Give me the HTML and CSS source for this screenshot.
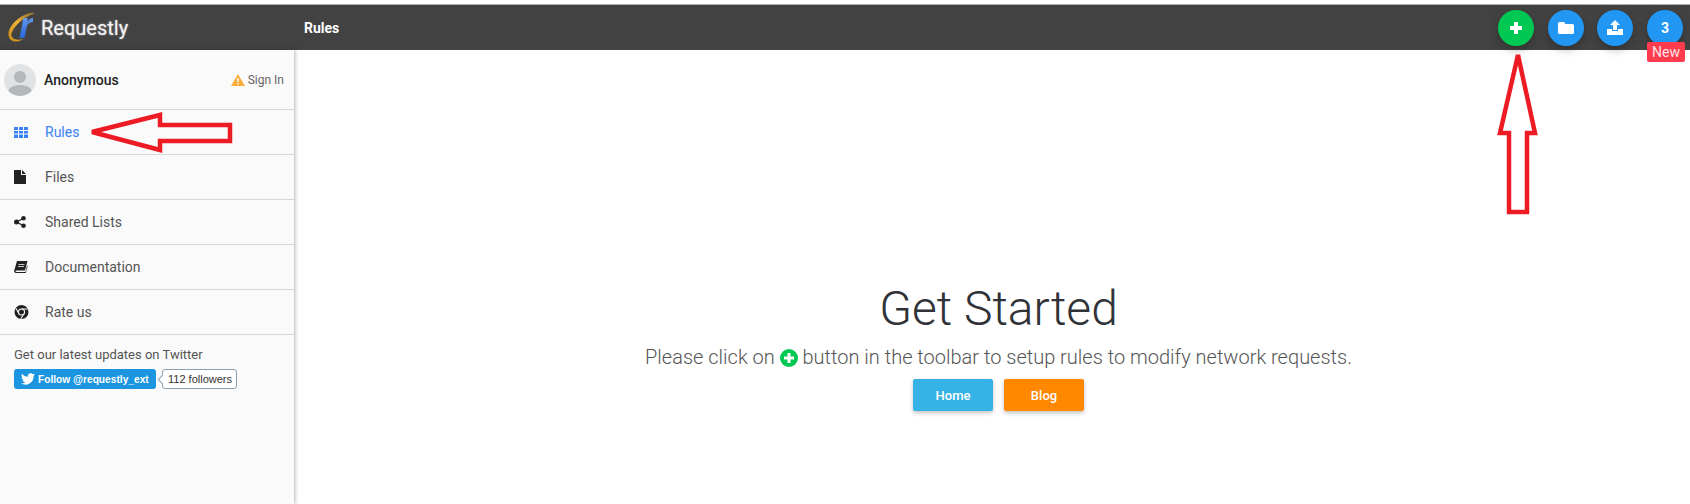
FILE: index.html

```html
<!DOCTYPE html>
<html lang="en">
<head>
    <meta charset="UTF-8">
    <meta name="viewport" content="width=device-width, initial-scale=1.0">
    <title>Requestly - Rules</title>
    <link rel="stylesheet" href="styles.css">
</head>
<body>
    <div class="app">
        <!-- Top toolbar -->
        <div class="topbar">
            <div class="brand">
                <span class="brand-logo">
                    <svg class="brand-ring" width="30" height="32" viewBox="0 0 30 32">
                        <defs>
                            <linearGradient id="ringGold" x1="1" y1="0" x2="0" y2="1">
                                <stop offset="0" stop-color="#8a6a3a"/>
                                <stop offset="0.5" stop-color="#f0b030"/>
                                <stop offset="1" stop-color="#c98a1c"/>
                            </linearGradient>
                        </defs>
                        <path d="M26 .5C15 1 2 11 .5 21 0 26 3 29.500 8 29.500c3 0 5-1 7-2.500-4 1.500-10 1-11.500-3C2.500 18 14 5 26 2z" fill="url(#ringGold)"/>
                    </svg>
                    <span class="brand-r">r</span>
                </span>
                <span class="brand-name">Requestly</span>
            </div>
            <div class="page-title">Rules</div>
            <div class="toolbar">
                <button type="button" class="fab green">
                    <svg width="16" height="16" viewBox="0 0 16 16"><path d="M6 2h4v4h4v4h-4v4H6v-4H2V6h4z" fill="#fff"/></svg>
                </button>
                <button type="button" class="fab">
                    <svg width="16" height="14" viewBox="0 0 16 14"><path d="M1.500 1h4.500l1.500 2h7a1.500 1.500 0 0 1 1.500 1.500v7a1.500 1.500 0 0 1-1.500 1.500h-13A1.500 1.500 0 0 1 0 11.500v-9A1.500 1.500 0 0 1 1.500 1z" fill="#fff"/></svg>
                </button>
                <button type="button" class="fab">
                    <svg width="16" height="15" viewBox="0 0 16 15"><path d="M8 0l5 5h-3v5H6V5H3zM0 9h5v2h6V9h5v6H0z" fill="#fff"/></svg>
                </button>
                <button type="button" class="fab count">3<span class="new-badge">New</span></button>
            </div>
        </div>

        <div class="body-row">
            <!-- Sidebar -->
            <div class="sidebar">
                <div class="user-row">
                    <div class="avatar">
                        <svg width="32" height="32" viewBox="0 0 32 32">
                            <circle cx="16" cy="13" r="6" fill="#b4b8bb"/>
                            <path d="M4 29c0-6 6-8 12-8s12 2 12 8c-3 2-8 3-12 3s-9-1-12-3z" fill="#b4b8bb"/>
                        </svg>
                    </div>
                    <span class="user-name">Anonymous</span>
                    <span class="sign-in">
                        <svg width="14" height="12" viewBox="0 0 14 12"><path d="M7 0l7 12H0z" fill="#f9ae3b"/><path d="M6.300 4h1.400v4H6.300zM6.300 9h1.400v1.400H6.300z" fill="#fff"/></svg>
                        Sign In
                    </span>
                </div>
                <a class="nav-item active">
                    <svg class="nav-icon" width="15" height="12" viewBox="0 0 15 12"><path d="M0 1h4v3H0zM5 1h4v3H5zM10 1h4v3h-4zM0 5h4v2.500H0zM5 5h4v2.500H5zM10 5h4v2.500h-4zM0 8.500h4V12H0zM5 8.500h4V12H5zM10 8.500h4V12h-4z" fill="#3b82f6"/></svg>
                    Rules
                </a>
                <a class="nav-item">
                    <svg class="nav-icon" width="15" height="14" viewBox="0 0 15 14"><path d="M0 0h7v5h5v9H0zM8 0l4 4H8z" fill="#222"/></svg>
                    Files
                </a>
                <a class="nav-item">
                    <svg class="nav-icon" width="15" height="12" viewBox="0 0 15 12"><circle cx="2.500" cy="6" r="2.500" fill="#222"/><circle cx="9.500" cy="2.300" r="2.300" fill="#222"/><circle cx="9.500" cy="9.700" r="2.300" fill="#222"/><path d="M2.500 6l7-3.700M2.500 6l7 3.700" stroke="#222" stroke-width="1.300"/></svg>
                    Shared Lists
                </a>
                <a class="nav-item">
                    <svg class="nav-icon" width="15" height="12" viewBox="0 0 15 12"><path d="M3 0h10.500L11 9.500H2.500c-.6 0-1 .3-1 .8s.4.7 1 .7h9l1.500-6.500.6.400L11.800 12H2c-1.200 0-2-1-1.900-2z" fill="#222"/><path d="M4.500 3h6v.8h-6zM4 5h6v.8H4z" fill="#fafafa"/></svg>
                    Documentation
                </a>
                <a class="nav-item">
                    <svg class="nav-icon" width="15" height="14" viewBox="0 0 14 14"><circle cx="7" cy="7" r="7" fill="#222"/><circle cx="7" cy="7" r="3.600" fill="#fafafa"/><circle cx="7" cy="7" r="2.500" fill="#222"/><path d="M7 3.400h6.200v1.100H7zM3.900 8.800L.9 3.600l.9-.6 3 5.200zM9.800 9l-3 5-.9-.6 3-5z" fill="#fafafa"/></svg>
                    Rate us
                </a>
                <div class="twitter-box">
                    <p>Get our latest updates on Twitter</p>
                    <div class="twitter-row">
                        <a class="follow-btn">
                            <svg width="14" height="12" viewBox="0 0 24 20"><path d="M24 2.400c-.9.400-1.800.7-2.800.8 1-.6 1.800-1.600 2.200-2.700-1 .6-2 1-3.100 1.200A4.900 4.900 0 0 0 11.900 6.200C7.800 6 4.200 4 1.700.9c-1.300 2.200-.7 5.100 1.500 6.600-.8 0-1.600-.2-2.200-.6 0 2.300 1.700 4.500 4 5-.7.200-1.500.2-2.200.1.600 2 2.400 3.400 4.600 3.400A9.900 9.900 0 0 1 0 17.400 14 14 0 0 0 21.500 5c1-.7 1.800-1.600 2.500-2.600z" fill="#fff"/></svg>
                            Follow @requestly_ext
                        </a>
                        <span class="followers">112 followers</span>
                    </div>
                </div>
            </div>

            <!-- Empty state -->
            <div class="main-content">
                <h1>Get Started</h1>
                <p class="hint">Please click on
                    <svg class="hint-icon" width="18" height="18" viewBox="0 0 18 18"><circle cx="9" cy="9" r="9" fill="#00c853"/><path d="M7.500 4h3v3.500H14v3h-3.500V14h-3v-3.500H4v-3h3.500z" fill="#fff"/></svg>
                    button in the toolbar to setup rules to modify network requests.</p>
                <div class="actions">
                    <button type="button" class="action-btn home">Home</button>
                    <button type="button" class="action-btn blog">Blog</button>
                </div>
            </div>
        </div>
    </div>

    <!-- Red annotation arrows drawn over the page -->
    <svg class="annotations" width="1690" height="504" viewBox="0 0 1690 504">
        <path d="M92 132L160 115V125H230V141H160V150Z" fill="none" stroke="#ed1c24" stroke-width="4.500"/>
        <path d="M1518 55L1535 133H1527V212H1509V133H1500Z" fill="none" stroke="#ed1c24" stroke-width="4.500"/>
    </svg>
</body>
</html>
```

FILE: styles.css

```css
* {
    margin: 0;
    padding: 0;
    box-sizing: border-box;
}

body {
    font-family: Roboto, 'Liberation Sans', sans-serif;
    background: white;
    height: 504px;
    overflow: hidden;
    padding-top: 4px;
}

.app {
    display: flex;
    flex-direction: column;
    height: 500px;
}

.topbar {
    display: flex;
    align-items: center;
    height: 46px;
    flex-shrink: 0;
    background: #424242;
    border-top: 1px solid #b0b0b0;
    color: white;
}

.brand {
    display: flex;
    align-items: center;
    width: 294px;
    padding-left: 8px;
}

.brand-logo {
    position: relative;
    display: block;
    width: 33px;
    height: 32px;
}

.brand-ring {
    position: absolute;
    left: 0;
    top: 0;
}

.brand-r {
    position: absolute;
    left: 11px;
    top: -8px;
    font-family: 'Liberation Sans', sans-serif;
    font-size: 36px;
    font-style: italic;
    font-weight: bold;
    line-height: 44px;
    background: linear-gradient(180deg, #8fb8f5, #2f6fe0 70%, #1f55c0);
    -webkit-background-clip: text;
    background-clip: text;
    color: transparent;
}

.brand-name {
    font-size: 20px;
    color: #f4f4f4;
    text-shadow: 0 0 2px rgba(255,255,255,0.6);
}

.page-title {
    font-size: 14px;
    font-weight: 700;
    margin-left: 10px;
}

.toolbar {
    display: flex;
    margin-left: auto;
    padding-right: 7px;
    gap: 13px;
}

.fab {
    position: relative;
    display: flex;
    align-items: center;
    justify-content: center;
    width: 36px;
    height: 36px;
    border: none;
    border-radius: 50%;
    background: #2196f3;
    color: white;
    font-family: Roboto, sans-serif;
    font-size: 14px;
    font-weight: 700;
    box-shadow: 0 4px 8px rgba(0,0,0,0.25);
}

.fab.green {
    background: #00c853;
    margin-right: 1px;
}

.fab.count {
    margin-left: 1px;
}

.new-badge {
    position: absolute;
    left: 0;
    top: 32px;
    width: 38px;
    height: 20px;
    border-radius: 2px;
    background: #ff3b4e;
    color: #ffe3e6;
    font-size: 14px;
    font-weight: 400;
    line-height: 20px;
    text-align: center;
}

.body-row {
    display: flex;
    flex: 1;
    min-height: 0;
}

.sidebar {
    width: 294px;
    flex-shrink: 0;
    background: #fafafa;
    box-shadow: 1px 0 4px rgba(0,0,0,0.3);
}

.user-row {
    display: flex;
    align-items: center;
    height: 60px;
    padding: 0 10px 0 4px;
    border-bottom: 1px solid #d8d8d8;
}

.avatar {
    width: 32px;
    height: 32px;
    border-radius: 50%;
    background: #e1e3e5;
    overflow: hidden;
}

.user-name {
    margin-left: 8px;
    font-size: 14px;
    font-weight: 500;
    color: #222;
}

.sign-in {
    display: flex;
    align-items: center;
    gap: 3px;
    margin-left: auto;
    font-size: 12px;
    color: #666;
}

.nav-item {
    display: flex;
    align-items: center;
    height: 45px;
    padding-left: 14px;
    border-bottom: 1px solid #d8d8d8;
    font-size: 14px;
    color: #555;
}

.nav-item.active {
    color: #3b82f6;
}

.nav-icon {
    margin-right: 16px;
    flex-shrink: 0;
}

.twitter-box {
    padding: 12px 14px;
    font-size: 13px;
    color: #555;
}

.twitter-row {
    display: flex;
    align-items: center;
    margin-top: 7px;
}

.follow-btn {
    display: flex;
    align-items: center;
    gap: 3px;
    width: 142px;
    height: 20px;
    padding-left: 7px;
    border-radius: 3px;
    background: #1b95e0;
    color: white;
    font-family: 'Liberation Sans', Arial, sans-serif;
    font-size: 10.200px;
    font-weight: bold;
    white-space: nowrap;
}

.followers {
    position: relative;
    height: 20px;
    margin-left: 6px;
    padding: 0 4px 0 5px;
    border: 1px solid #8aa0b0;
    border-radius: 3px;
    background: white;
    color: #333;
    font-family: 'Liberation Sans', Arial, sans-serif;
    font-size: 11px;
    line-height: 18px;
}

.followers::before {
    content: "";
    position: absolute;
    left: -4px;
    top: 6px;
    width: 6px;
    height: 6px;
    border-left: 1px solid #8aa0b0;
    border-bottom: 1px solid #8aa0b0;
    background: white;
    transform: rotate(45deg);
}

.main-content {
    flex: 1;
    padding: 231px 0 0 13px;
    text-align: center;
}

.main-content h1 {
    font-size: 48px;
    font-weight: 300;
    line-height: 56px;
    color: #2f3237;
}

.hint {
    margin-top: 8px;
    font-size: 20px;
    font-weight: 300;
    line-height: 24px;
    color: #555;
}

.hint-icon {
    vertical-align: -3px;
}

.actions {
    display: flex;
    justify-content: center;
    gap: 11px;
    margin-top: 10px;
}

.action-btn {
    width: 80px;
    height: 32px;
    border: none;
    border-radius: 2px;
    color: white;
    font-family: Roboto, sans-serif;
    font-size: 13px;
    font-weight: 500;
    box-shadow: 0 2px 4px rgba(0,0,0,0.25);
}

.action-btn.home {
    background: #35b2e6;
}

.action-btn.blog {
    background: #ff8800;
}

.annotations {
    position: absolute;
    left: 0;
    top: 0;
    pointer-events: none;
}
```
